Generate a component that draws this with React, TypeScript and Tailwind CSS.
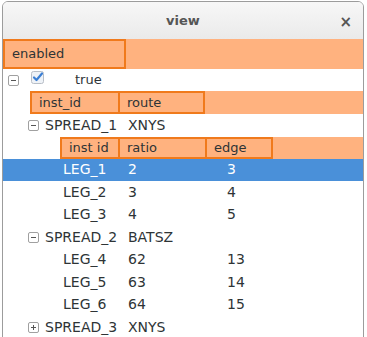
const legs = [
  { name: "LEG_1", ratio: "2", edge: "3", selected: true },
  { name: "LEG_2", ratio: "3", edge: "4" },
  { name: "LEG_3", ratio: "4", edge: "5" },
];

const legs2 = [
  { name: "LEG_4", ratio: "62", edge: "13" },
  { name: "LEG_5", ratio: "63", edge: "14" },
  { name: "LEG_6", ratio: "64", edge: "15" },
];

function Expander({ open }: { open: boolean }) {
  return (
    <svg width="11" height="11" viewBox="0 0 11 11" className="shrink-0">
      <rect x="0.5" y="0.5" width="10" height="10" rx="1.5" fill="#fff" stroke="#a0a0a0" />
      <path d="M3 5.5h5" stroke="#555" strokeWidth="1" />
      {!open && <path d="M5.5 3v5" stroke="#555" strokeWidth="1" />}
    </svg>
  );
}

function Check() {
  return (
    <svg width="13" height="13" viewBox="0 0 13 13">
      <rect x="0.5" y="0.5" width="12" height="12" rx="2" fill="#eef2f7" stroke="#b8bec6" />
      <path d="M3 6.5l2.5 2.5L11 2.5" fill="none" stroke="#3b7fd4" strokeWidth="2.2" strokeLinecap="round" strokeLinejoin="round" />
    </svg>
  );
}

function Head({ label, w }: { label: string; w: string }) {
  return (
    <div className={`${w} h-full border-2 border-[#f07a1c] flex items-center pl-[7px] -ml-[2px] first:ml-0`}>
      {label}
    </div>
  );
}

function LegRow({ name, ratio, edge, selected }: { name: string; ratio: string; edge: string; selected?: boolean }) {
  return (
    <div className={`h-[22.5px] flex items-center text-[14px] ${selected ? "bg-[#4a90d9] text-white" : ""}`}>
      <div className="w-[125px] pl-[60px]">{name}</div>
      <div className="w-[99px]">{ratio}</div>
      <div>{edge}</div>
    </div>
  );
}

function SpreadRow({ name, venue, open }: { name: string; venue: string; open: boolean }) {
  return (
    <div className="h-[22.5px] flex items-center text-[14px]">
      <div className="w-[125px] pl-[25px] flex items-center gap-[6px]">
        <Expander open={open} />
        <span>{name}</span>
      </div>
      <div>{venue}</div>
    </div>
  );
}

export default function App() {
  return (
    <div className="w-[367px] h-[337px] overflow-hidden bg-white pl-[2px] pt-[1px] font-['DejaVu_Sans',sans-serif] text-[13px] text-[#2e3436]">
      <div className="w-[362px] h-[400px] border border-[#9c9c9c] rounded-t-[6px] overflow-hidden bg-white">
        <div className="h-[37px] bg-gradient-to-b from-[#f7f7f7] to-[#eaeaea] flex items-center justify-center relative">
          <span className="font-bold text-[#555] text-[13px]">view</span>
          <span className="absolute right-[11px] top-[9px] text-[#555] font-bold text-[15px]">×</span>
        </div>

        <div className="h-[30px] bg-[#ffb27f] flex">
          <Head label="enabled" w="w-[123px]" />
        </div>

        <div className="h-[22px] flex items-center">
          <div className="pl-[5px] flex items-center">
            <Expander open />
          </div>
          <div className="ml-[12px] -mt-[6px]">
            <Check />
          </div>
          <span className="ml-[31px]">true</span>
        </div>

        <div className="h-[23px] pl-[27px]">
          <div className="h-full bg-[#ffb27f] flex">
            <Head label="inst_id" w="w-[90px]" />
            <Head label="route" w="w-[87px]" />
          </div>
        </div>

        <SpreadRow name="SPREAD_1" venue="XNYS" open />

        <div className="h-[22px] pl-[57px]">
          <div className="h-full bg-[#ffb27f] flex">
            <Head label="inst id" w="w-[60px]" />
            <Head label="ratio" w="w-[89px]" />
            <Head label="edge" w="w-[68px]" />
          </div>
        </div>

        {legs.map((l) => (
          <LegRow key={l.name} {...l} />
        ))}

        <SpreadRow name="SPREAD_2" venue="BATSZ" open />

        {legs2.map((l) => (
          <LegRow key={l.name} {...l} />
        ))}

        <SpreadRow name="SPREAD_3" venue="XNYS" open={false} />
      </div>
    </div>
  );
}
